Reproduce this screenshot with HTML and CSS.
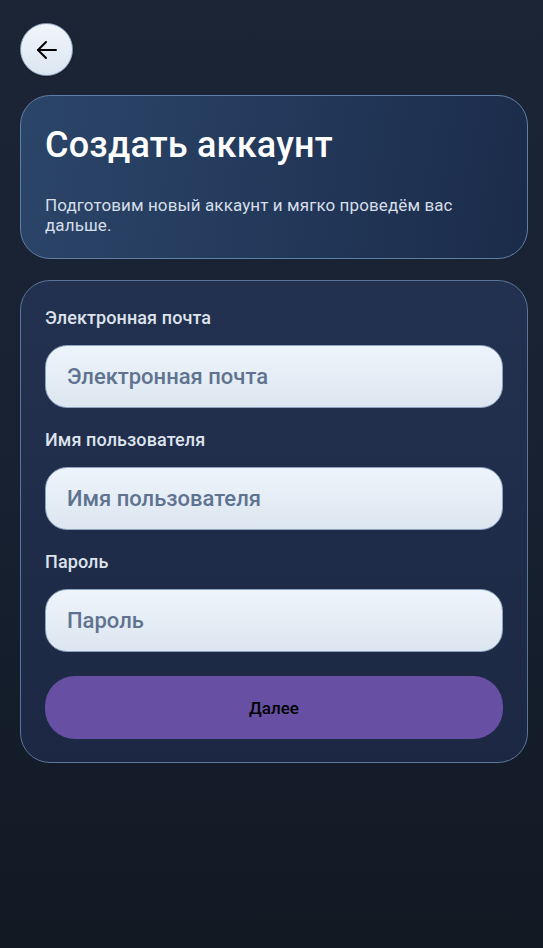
FILE: index.html
```html
<!DOCTYPE html>
<html lang="ru">
<head>
<meta charset="utf-8">
<meta name="viewport" content="width=device-width, initial-scale=1">
<title>Создать аккаунт</title>
<link rel="stylesheet" href="styles.css">
</head>
<body>
<main class="screen">
  <button class="back" type="button" aria-label="Назад">
    <svg width="28" height="28" viewBox="0 0 28 28" fill="none" stroke="#000" stroke-width="2" stroke-linecap="round" stroke-linejoin="round">
      <path d="M23 14H5"/>
      <path d="M13 6l-8 8 8 8"/>
    </svg>
  </button>

  <section class="hero">
    <h1 class="title">Создать аккаунт</h1>
    <p class="subtitle">Подготовим новый аккаунт и мягко проведём вас дальше.</p>
  </section>

  <form class="form">
    <div class="field">
      <label class="label" for="email">Электронная почта</label>
      <input class="input" id="email" type="email" placeholder="Электронная почта">
    </div>
    <div class="field">
      <label class="label" for="user">Имя пользователя</label>
      <input class="input" id="user" type="text" placeholder="Имя пользователя">
    </div>
    <div class="field">
      <label class="label" for="pass">Пароль</label>
      <input class="input" id="pass" type="password" placeholder="Пароль">
    </div>
    <button class="next" type="button">Далее</button>
  </form>
</main>
</body>
</html>
```

FILE: styles.css
```css
* { box-sizing: border-box; }

html, body {
  margin: 0;
  padding: 0;
  height: 100%;
}

body {
  font-family: Roboto, "Noto Sans", "Liberation Sans", sans-serif;
  background: linear-gradient(180deg, #1c2535 0%, #172131 50%, #111923 100%);
  color: #fff;
  min-height: 948px;
}

.screen {
  display: flex;
  flex-direction: column;
  align-items: flex-start;
  padding: 23px 15px 0 20px;
}

.back {
  width: 53px;
  height: 53px;
  border-radius: 50%;
  border: 1px solid #8da4c2;
  background: linear-gradient(180deg, #f1f5fb 0%, #dbe6f1 100%);
  display: flex;
  align-items: center;
  justify-content: center;
  padding: 0;
  box-shadow: 0 1px 2px rgba(0,0,0,0.3);
}

.back svg { width: 28px; height: 28px; display: block; }

.hero {
  align-self: stretch;
  margin-top: 19px;
  border: 1px solid #5f7ea6;
  border-radius: 30px;
  background: linear-gradient(100deg, #2b4568 0%, #253c5e 40%, #1b2b4a 100%);
  padding: 27px 24px 23px 24px;
}

.title {
  margin: 0;
  font-size: 36px;
  font-weight: 500;
  line-height: 44px;
  color: #ffffff;
  letter-spacing: 0.2px;
}

.subtitle {
  margin: 28px 0 0 0;
  font-size: 17px;
  line-height: 20px;
  letter-spacing: 0.1px;
  color: #d6dee9;
  max-width: 440px;
}

.form {
  align-self: stretch;
  margin-top: 21px;
  border: 1px solid #5a759b;
  border-radius: 30px;
  background: linear-gradient(180deg, #233150 0%, #1c2843 100%);
  padding: 25px 24px 23px 24px;
  display: flex;
  flex-direction: column;
}

.field {
  display: flex;
  flex-direction: column;
  margin-bottom: 20px;
}

.field:last-of-type { margin-bottom: 24px; }

.label {
  font-size: 18px;
  line-height: 24px;
  font-weight: 500;
  letter-spacing: 0.1px;
  color: #dde3ec;
  margin-bottom: 15px;
}

.input {
  height: 63px;
  width: 100%;
  border: 1px solid #8ea3bf;
  border-radius: 22px;
  background: linear-gradient(180deg, #eef4fb 0%, #dce6f0 100%);
  padding: 0 21px;
  font-family: Roboto, "Noto Sans", "Liberation Sans", sans-serif;
  font-size: 22px;
  font-weight: 500;
  color: #1b2538;
  outline: none;
}

.input::placeholder {
  color: #5f7390;
  opacity: 1;
}

.next {
  height: 63px;
  width: 100%;
  border: none;
  border-radius: 30px;
  background: #6750a4;
  color: #000;
  font-family: Roboto, "Noto Sans", "Liberation Sans", sans-serif;
  font-size: 17px;
  font-weight: 500;
}
```
